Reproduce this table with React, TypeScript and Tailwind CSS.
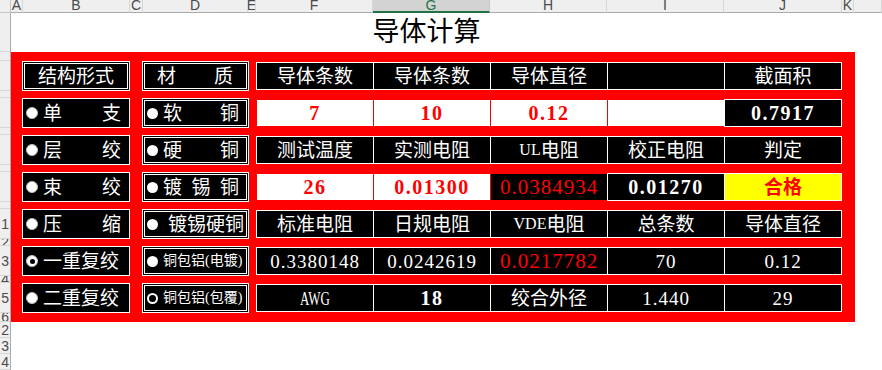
import React from "react";

type Col = { l: string; w: string; sel?: boolean };
const cols: Col[] = [
  { l: "A", w: "w-[12px]" },
  { l: "B", w: "w-[107px]" },
  { l: "C", w: "w-[13px]" },
  { l: "D", w: "w-[105px]" },
  { l: "E", w: "w-[8px]" },
  { l: "F", w: "w-[117px]" },
  { l: "G", w: "w-[117px]", sel: true },
  { l: "H", w: "w-[117px]" },
  { l: "I", w: "w-[117px]" },
  { l: "J", w: "w-[118px]" },
  { l: "K", w: "w-[12px]" },
  { l: "", w: "flex-1" },
];

const rowHeads: { h: string; n: string }[] = [
  { h: "h-[39px]", n: "" },
  { h: "h-[9px]", n: "" },
  { h: "h-[30px]", n: "" },
  { h: "h-[7px]", n: "" },
  { h: "h-[30px]", n: "" },
  { h: "h-[7px]", n: "" },
  { h: "h-[30px]", n: "" },
  { h: "h-[7px]", n: "" },
  { h: "h-[30px]", n: "" },
  { h: "h-[7px]", n: "" },
  { h: "h-[30px]", n: "1" },
  { h: "h-[7px]", n: "2" },
  { h: "h-[30px]", n: "3" },
  { h: "h-[7px]", n: "4" },
  { h: "h-[30px]", n: "5" },
  { h: "h-[9px]", n: "6" },
  { h: "h-[16px]", n: "2" },
  { h: "h-[16px]", n: "3" },
  { h: "h-[16px]", n: "4" },
];

function Radio({ checked }: { checked?: boolean }) {
  return (
    <div className="w-[12px] h-[12px] shrink-0 rounded-full bg-white border border-[#bdbdbd] flex items-center justify-center">
      {checked && <div className="w-[5px] h-[5px] rounded-full bg-black" />}
    </div>
  );
}

function DDot({ hollow }: { hollow?: boolean }) {
  return hollow ? (
    <div className="w-[11px] h-[11px] shrink-0 rounded-full border-2 border-white" />
  ) : (
    <div className="w-[11px] h-[11px] shrink-0 rounded-full bg-white" />
  );
}

function BCell({ chars, checked }: { chars: string[]; checked?: boolean }) {
  return (
    <div className="w-[108px] h-[30px] shrink-0 border border-white bg-black flex items-center pl-[3px] pr-[8px]">
      <Radio checked={checked} />
      <div className="ml-[5px] flex-1 flex justify-between text-[19px] leading-none text-white">
        {chars.map((c, i) => (
          <span key={i}>{c}</span>
        ))}
      </div>
    </div>
  );
}

function DoubleBox({ w, children }: { w: string; children: React.ReactNode }) {
  return (
    <div className={`${w} h-[30px] shrink-0 border border-white bg-black p-px`}>
      <div className="h-full border border-white flex items-center text-white leading-none">
        {children}
      </div>
    </div>
  );
}

function DCell({
  chars,
  hollow,
  small,
  wide,
}: {
  chars: string[];
  hollow?: boolean;
  small?: boolean;
  wide?: boolean;
}) {
  return (
    <DoubleBox w="w-[107px]">
      <div className="flex items-center w-full pl-[2px] pr-[3px]">
        <DDot hollow={hollow} />
        {small ? (
          <div className="ml-[5px] text-[14px] whitespace-nowrap">{chars[0]}</div>
        ) : wide ? (
          <div className="ml-[10px] text-[19px] whitespace-nowrap">{chars[0]}</div>
        ) : (
          <div className="ml-[5px] mr-[4px] flex-1 flex justify-between text-[19px]">
            {chars.map((c, i) => (
              <span key={i}>{c}</span>
            ))}
          </div>
        )}
      </div>
    </DoubleBox>
  );
}

type Kind = "h" | "w" | "we" | "bb" | "b" | "brr" | "brw" | "y" | "awg";
const kindCls: Record<Kind, string> = {
  h: "bg-black border-white text-white text-[19px]",
  w: "bg-white border-[#ff0000] text-[#ff0000] font-bold text-[20px] tracking-[1.5px]",
  we: "bg-white border-[#ff0000]",
  bb: "bg-black border-white text-white font-bold text-[20px] tracking-[1.5px]",
  b: "bg-black border-white text-white text-[19px] tracking-[1px]",
  brr: "bg-black border-[#ff0000] text-[#ff0000] text-[21px] tracking-[1px]",
  brw: "bg-black border-white text-[#ff0000] text-[21px] tracking-[1px]",
  y: "bg-[#ffff00] border-white text-[#ff0000] font-bold text-[19px]",
  awg: "bg-black border-white text-white text-[19px]",
};

type Cell = { t: React.ReactNode; k: Kind };

const dataRows: Cell[][] = [
  [
    { t: "导体条数", k: "h" },
    { t: "导体条数", k: "h" },
    { t: "导体直径", k: "h" },
    { t: "", k: "h" },
    { t: "截面积", k: "h" },
  ],
  [
    { t: "7", k: "w" },
    { t: "10", k: "w" },
    { t: "0.12", k: "w" },
    { t: "", k: "we" },
    { t: "0.7917", k: "bb" },
  ],
  [
    { t: "测试温度", k: "h" },
    { t: "实测电阻", k: "h" },
    {
      t: (
        <>
          <span className="text-[16px]">UL</span>电阻
        </>
      ),
      k: "h",
    },
    { t: "校正电阻", k: "h" },
    { t: "判定", k: "h" },
  ],
  [
    { t: "26", k: "w" },
    { t: "0.01300", k: "w" },
    { t: "0.0384934", k: "brr" },
    { t: "0.01270", k: "bb" },
    { t: "合格", k: "y" },
  ],
  [
    { t: "标准电阻", k: "h" },
    { t: "日规电阻", k: "h" },
    {
      t: (
        <>
          <span className="text-[16px]">VDE</span>电阻
        </>
      ),
      k: "h",
    },
    { t: "总条数", k: "h" },
    { t: "导体直径", k: "h" },
  ],
  [
    { t: "0.3380148", k: "b" },
    { t: "0.0242619", k: "b" },
    { t: "0.0217782", k: "brw" },
    { t: "70", k: "b" },
    { t: "0.12", k: "b" },
  ],
  [
    { t: <span className="inline-block scale-x-[0.68]">AWG</span>, k: "awg" },
    { t: "18", k: "bb" },
    { t: "绞合外径", k: "h" },
    { t: "1.440", k: "b" },
    { t: "29", k: "b" },
  ],
];

function DataRow({ cells }: { cells: Cell[] }) {
  return (
    <div className="flex h-[28px] self-center">
      {cells.map((c, i) => (
        <div
          key={i}
          className={`w-[118px] h-[28px] border flex items-center justify-center leading-none whitespace-nowrap ${
            i > 0 ? "-ml-px" : ""
          } ${kindCls[c.k]}`}
        >
          {c.t}
        </div>
      ))}
    </div>
  );
}

const leftB: { chars: string[]; checked?: boolean }[] = [
  { chars: ["单", "支"] },
  { chars: ["层", "绞"] },
  { chars: ["束", "绞"] },
  { chars: ["压", "缩"] },
  { chars: ["一重复绞"], checked: true },
  { chars: ["二重复绞"] },
];

const leftD: { chars: string[]; hollow?: boolean; small?: boolean; wide?: boolean }[] = [
  { chars: ["软", "铜"] },
  { chars: ["硬", "铜"] },
  { chars: ["镀", "锡", "铜"] },
  { chars: ["镀锡硬铜"], wide: true },
  { chars: ["铜包铝(电镀)"], small: true },
  { chars: ["铜包铝(包覆)"], small: true, hollow: true },
];

export default function App() {
  return (
    <div className="w-[882px] h-[370px] overflow-hidden bg-white font-['Liberation_Serif','Noto_Sans_CJK_SC',serif]">
      {/* column header */}
      <div className="flex h-[13px] bg-[#efefef] font-['Liberation_Sans','Noto_Sans_CJK_SC',sans-serif]">
        <div className="w-[11px] h-[13px] shrink-0 border-r border-b border-[#c6c6c6] bg-[#efefef]" />
        {cols.map((c, i) => (
          <div
            key={i}
            className={`${c.w} h-[13px] shrink-0 overflow-hidden flex justify-center text-[14px] leading-[10px] ${
              c.sel
                ? "bg-[#d3d3d3] text-[#217346] border-r border-r-[#c6c6c6] border-b-2 border-b-[#217346]"
                : "text-[#4a4a4a] border-r border-r-[#d6d6d6] border-b border-b-[#ababab]"
            }`}
          >
            {c.l}
          </div>
        ))}
      </div>

      <div className="flex">
        {/* row header */}
        <div className="w-[11px] shrink-0 bg-[#efefef] border-r border-[#ababab] flex flex-col font-['Liberation_Sans',sans-serif]">
          {rowHeads.map((r, i) => (
            <div
              key={i}
              className={`${r.h} shrink-0 overflow-hidden border-b border-[#d6d6d6] flex items-center justify-end pr-[1px] text-[14px] leading-[14px] text-[#4a4a4a]`}
            >
              <span className="whitespace-nowrap">{r.n}</span>
            </div>
          ))}
        </div>

        {/* sheet */}
        <div className="flex-1">
          <div className="w-[831px] h-[39px] flex items-center justify-center text-[27px] leading-none text-black">
            导体计算
          </div>
          <div className="w-[844px] h-[270px] bg-[#ff0000] pt-[9px] pl-[11px] flex flex-col gap-[7px]">
            {dataRows.map((cells, r) => (
              <div key={r} className="flex h-[30px]">
                {r === 0 ? (
                  <DoubleBox w="w-[108px]">
                    <div className="w-full text-center text-[19px]">结构形式</div>
                  </DoubleBox>
                ) : (
                  <BCell chars={leftB[r - 1].chars} checked={leftB[r - 1].checked} />
                )}
                <div className="w-[12px] shrink-0" />
                {r === 0 ? (
                  <DoubleBox w="w-[107px]">
                    <div className="w-full flex justify-between pl-[12px] pr-[13px] text-[19px]">
                      <span>材</span>
                      <span>质</span>
                    </div>
                  </DoubleBox>
                ) : (
                  <DCell {...leftD[r - 1]} />
                )}
                <div className="w-[7px] shrink-0" />
                <DataRow cells={cells} />
              </div>
            ))}
          </div>
        </div>
      </div>
    </div>
  );
}
